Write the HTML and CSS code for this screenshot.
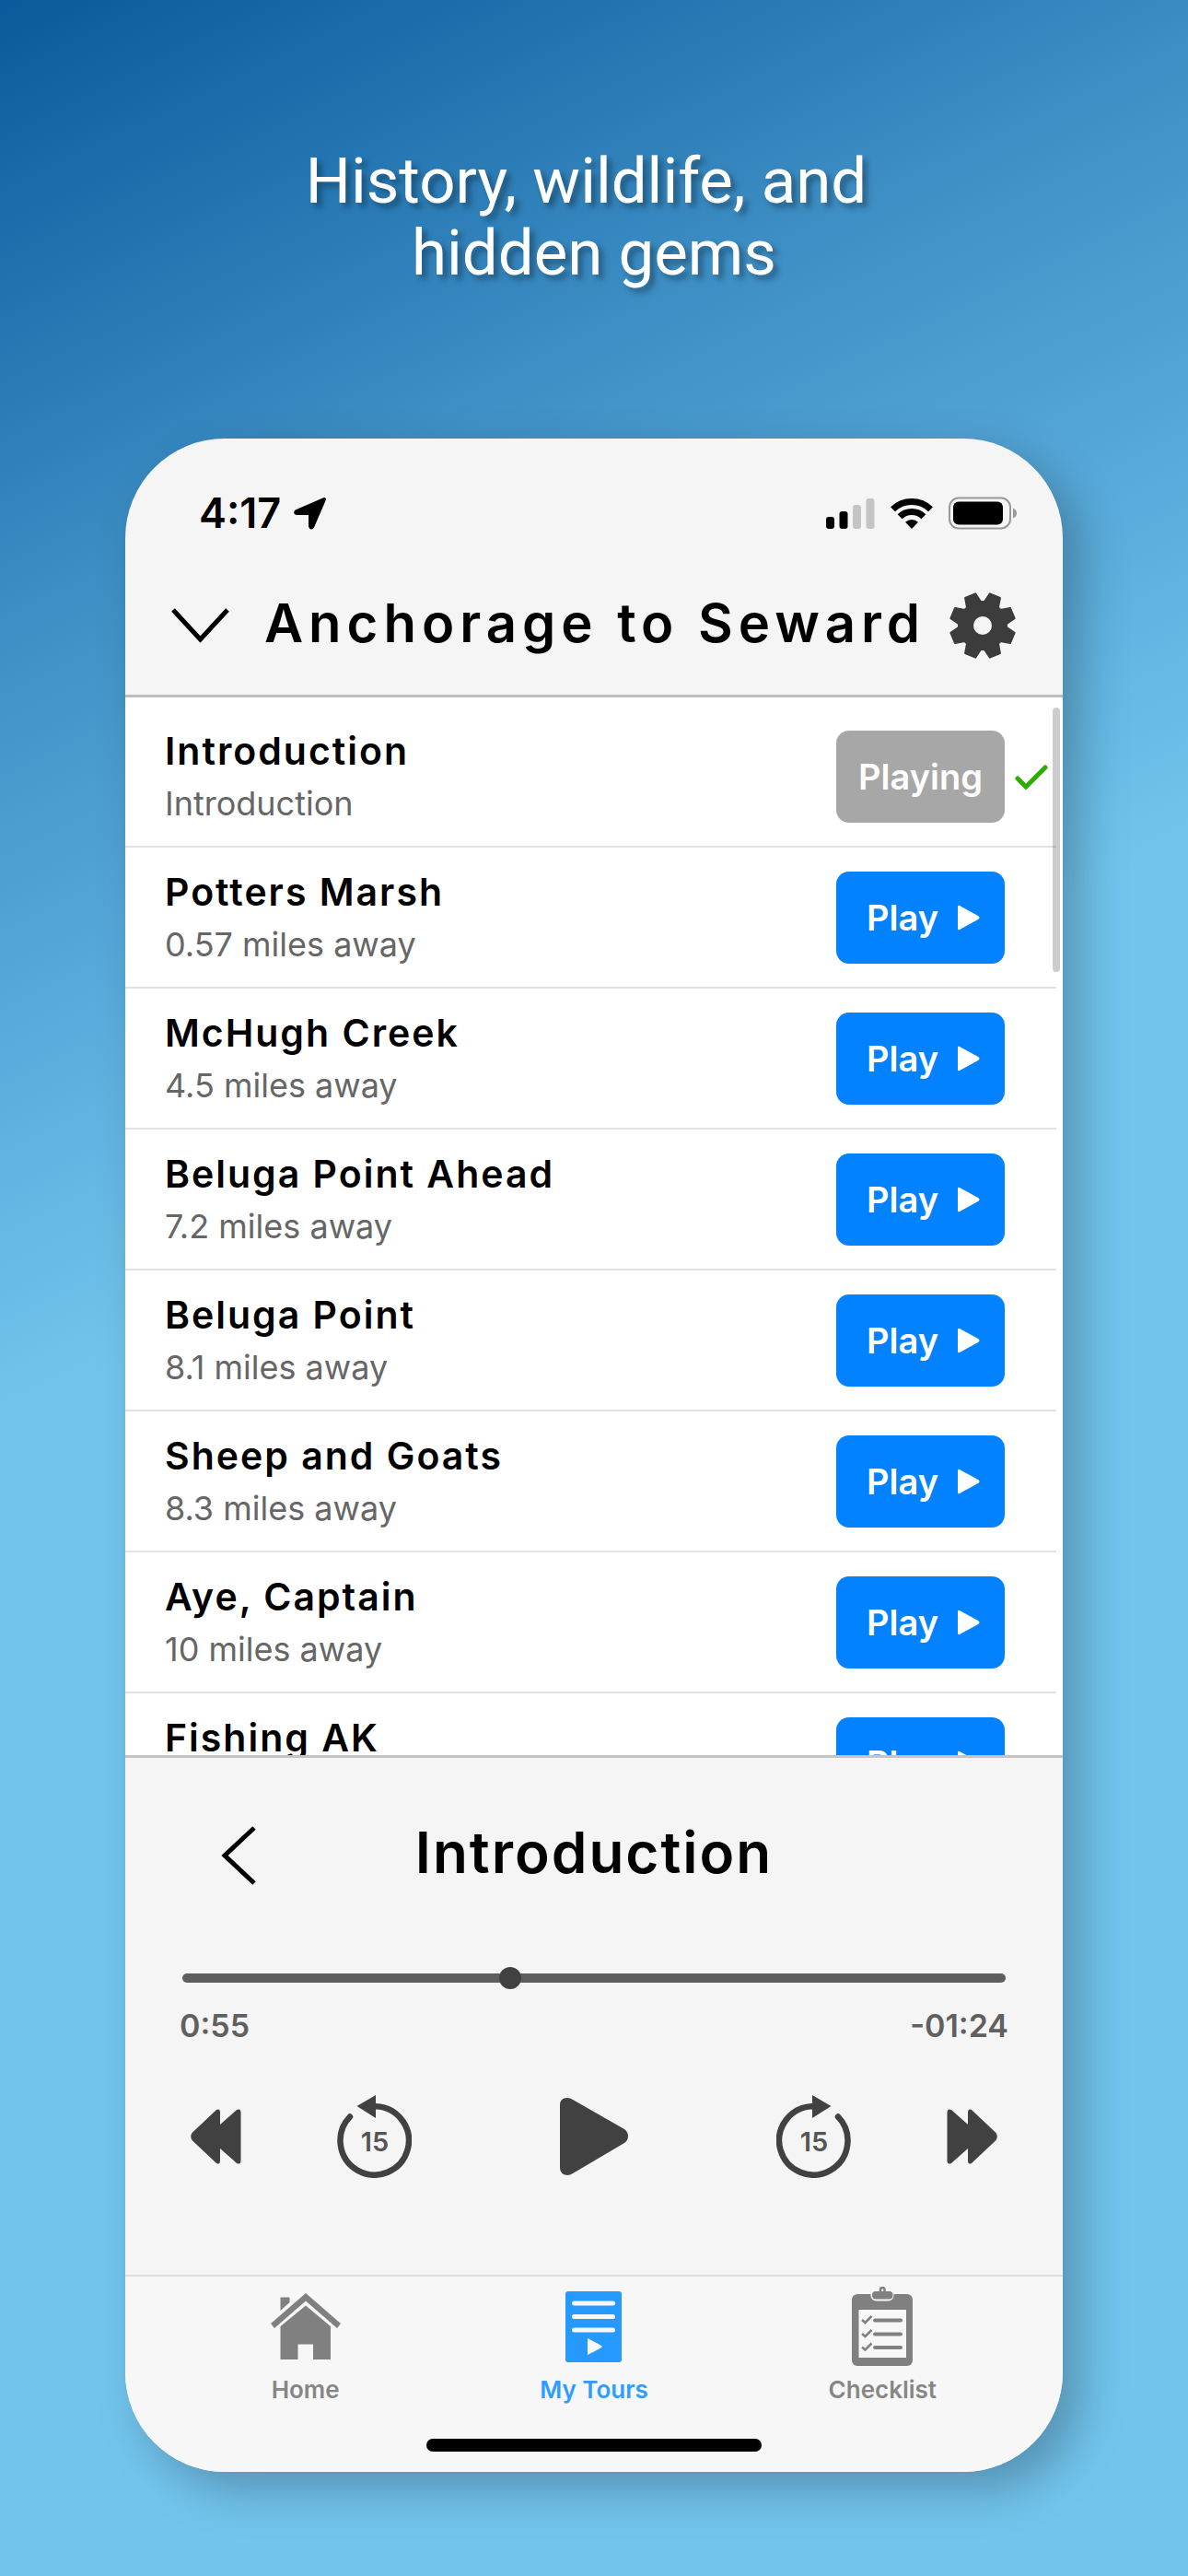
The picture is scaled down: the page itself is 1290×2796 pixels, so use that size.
FILE: index.html
```html
<!DOCTYPE html>
<html lang="en">

<head>
    <meta charset="utf-8">
    <meta name="viewport" content="width=device-width, initial-scale=1.0">
    <title>Anchorage to Seward</title>
    <link rel="stylesheet" href="styles.css">
</head>

<body>
    <h1 class="headline">History, wildlife, and 
hidden gems</h1>

    <main class="phone">
        <div class="status">
            <span class="time">4:17</span>
            <svg width="36" height="36" viewBox="0 0 36 36"><path d="M33 3L3 16q-2 2 1 2h14v14q1 3 2.500 0z" stroke="#000" stroke-width="4" stroke-linejoin="round"/></svg>
            <div class="status-icons">
                <svg width="53" height="34" viewBox="0 0 53 34">
                    <rect y="21" width="9" height="13" rx="3"/>
                    <rect x="14.500" y="15" width="9" height="19" rx="3"/>
                    <rect x="29" y="8" width="9" height="26" rx="3" fill="#c4c4c4"/>
                    <rect x="43.500" y="1" width="9" height="33" rx="3" fill="#c4c4c4"/>
                </svg>
                <svg width="46" height="34" viewBox="-23 -34 46 34">
                    <path d="M-20.500-21.200a29.500 29.500 0 0 1 41 0M-12.900-13.300a18.500 18.500 0 0 1 25.800 0" fill="none" stroke="#000" stroke-width="7"/>
                    <path d="M0 0L-7-7.200a10 10 0 0 1 14 0z"/>
                </svg>
                <svg width="74" height="36" viewBox="0 0 74 36">
                    <rect x="1" y="1.500" width="66" height="33" rx="10" fill="none" stroke="#999" stroke-width="2"/>
                    <rect x="5" y="5.500" width="54" height="25" rx="6"/>
                    <path d="M70 12.500q4 1.500 4 5.500t-4 5.500z" fill="#999"/>
                </svg>
            </div>
        </div>

        <header class="header">
            <button class="icon-button" aria-label="Close">
                <svg width="63" height="38" viewBox="0 0 63 38"><path d="M2 2l29.500 32L61 2" fill="none" stroke="#000" stroke-width="5"/></svg>
            </button>
            <h2 class="tour-name">Anchorage to Seward</h2>
            <button class="icon-button" aria-label="Settings">
                <svg width="72" height="72" viewBox="-36 -36 72 72">
                    <defs><path id="tooth" d="M-8.500-23L-6-35H6L8.500-23z"/></defs>
                    <g fill="#3c3c3c" stroke="#3c3c3c" stroke-width="2" stroke-linejoin="round">
                        <use href="#tooth" transform="rotate(22.500)"/>
                        <use href="#tooth" transform="rotate(67.500)"/>
                        <use href="#tooth" transform="rotate(112.500)"/>
                        <use href="#tooth" transform="rotate(157.500)"/>
                        <use href="#tooth" transform="rotate(202.500)"/>
                        <use href="#tooth" transform="rotate(247.500)"/>
                        <use href="#tooth" transform="rotate(292.500)"/>
                        <use href="#tooth" transform="rotate(337.500)"/>
                    </g>
                    <circle r="18.500" fill="none" stroke="#3c3c3c" stroke-width="17"/>
                </svg>
            </button>
        </header>

        <section class="stops">
            <ul class="stop-list">
                <li class="stop">
                    <div><h3>Introduction</h3><p>Introduction</p></div>
                    <button class="play playing">Playing</button>
                    <svg class="check" width="36" height="30" viewBox="0 0 36 30"><path d="M3 16l9 9L33 4" fill="none" stroke="#2aaf00" stroke-width="5" stroke-linecap="round"/></svg>
                </li>
                <li class="stop">
                    <div><h3>Potters Marsh</h3><p>0.57 miles away</p></div>
                    <button class="play">Play <svg width="25" height="28" viewBox="0 0 25 28"><path d="M1 2q0-2 2-1l20 11q3 2 0 4L3 27q-2 1-2-1z" fill="#fff"/></svg></button>
                </li>
                <li class="stop">
                    <div><h3>McHugh Creek</h3><p>4.5 miles away</p></div>
                    <button class="play">Play <svg width="25" height="28" viewBox="0 0 25 28"><path d="M1 2q0-2 2-1l20 11q3 2 0 4L3 27q-2 1-2-1z" fill="#fff"/></svg></button>
                </li>
                <li class="stop">
                    <div><h3>Beluga Point Ahead</h3><p>7.2 miles away</p></div>
                    <button class="play">Play <svg width="25" height="28" viewBox="0 0 25 28"><path d="M1 2q0-2 2-1l20 11q3 2 0 4L3 27q-2 1-2-1z" fill="#fff"/></svg></button>
                </li>
                <li class="stop">
                    <div><h3>Beluga Point</h3><p>8.1 miles away</p></div>
                    <button class="play">Play <svg width="25" height="28" viewBox="0 0 25 28"><path d="M1 2q0-2 2-1l20 11q3 2 0 4L3 27q-2 1-2-1z" fill="#fff"/></svg></button>
                </li>
                <li class="stop">
                    <div><h3>Sheep and Goats</h3><p>8.3 miles away</p></div>
                    <button class="play">Play <svg width="25" height="28" viewBox="0 0 25 28"><path d="M1 2q0-2 2-1l20 11q3 2 0 4L3 27q-2 1-2-1z" fill="#fff"/></svg></button>
                </li>
                <li class="stop">
                    <div><h3>Aye, Captain</h3><p>10 miles away</p></div>
                    <button class="play">Play <svg width="25" height="28" viewBox="0 0 25 28"><path d="M1 2q0-2 2-1l20 11q3 2 0 4L3 27q-2 1-2-1z" fill="#fff"/></svg></button>
                </li>
                <li class="stop">
                    <div><h3>Fishing AK</h3></div>
                    <button class="play">Play <svg width="25" height="28" viewBox="0 0 25 28"><path d="M1 2q0-2 2-1l20 11q3 2 0 4L3 27q-2 1-2-1z" fill="#fff"/></svg></button>
                </li>
            </ul>
            <div class="scrollbar"></div>
        </section>

        <section class="player">
            <div class="player-title">
                <button class="icon-button" aria-label="Back">
                    <svg width="38" height="64" viewBox="0 0 38 64"><path d="M36 2L4 32l32 30" fill="none" stroke="#000" stroke-width="5"/></svg>
                </button>
                <h2>Introduction</h2>
            </div>

            <input class="seek" type="range" min="0" max="139" value="55" aria-label="Position">
            <div class="times">
                <span>0:55</span>
                <span>-01:24</span>
            </div>

            <div class="controls">
                <div class="control-group">
                    <button class="icon-button" aria-label="Previous">
                        <svg width="55" height="60" viewBox="0 0 55 60"><path d="M1.500 26L28 1Q32-1 32 4V17L50 1Q54.500-1 54.500 4V56Q54.500 61 50 59L32 43V56Q32 61 28 59L1.500 34Q-1 30 1.500 26z" fill="#414141"/></svg>
                    </button>
                    <button class="icon-button" aria-label="Back 15 seconds">
                        <svg width="81" height="90" viewBox="0 0 81 90">
                            <path d="M14 23.500A37.200 37.200 0 1 0 42 12.200" fill="none" stroke="#414141" stroke-width="6.500" stroke-linecap="round"/>
                            <path d="M21.500 12L42 0v25z" fill="#414141"/>
                            <text class="seconds" x="41" y="61" text-anchor="middle">15</text>
                        </svg>
                    </button>
                </div>
                <button class="icon-button" aria-label="Play">
                    <svg width="74" height="84" viewBox="0 0 74 84"><path d="M0 8Q0 0 8 0Q11 0 14 2L70 34Q74 37 74 41.500T70 49L14 82Q11 84 8 84Q0 83 0 76z" fill="#414141"/></svg>
                </button>
                <div class="control-group">
                    <button class="icon-button" aria-label="Forward 15 seconds">
                        <svg width="81" height="90" viewBox="0 0 81 90">
                            <path d="M67 23.500A37.200 37.200 0 1 1 39 12.200" fill="none" stroke="#414141" stroke-width="6.500" stroke-linecap="round"/>
                            <path d="M59.500 12L39 0v25z" fill="#414141"/>
                            <text class="seconds" x="41" y="61" text-anchor="middle">15</text>
                        </svg>
                    </button>
                    <button class="icon-button" aria-label="Next">
                        <svg width="55" height="60" viewBox="0 0 55 60"><path d="M53.500 26L27 1Q23-1 23 4V17L5 1Q.5-1 .5 4V56Q.5 61 5 59L23 43V56Q23 61 27 59L53.500 34Q56 30 53.500 26z" fill="#414141"/></svg>
                    </button>
                </div>
            </div>
        </section>

        <footer class="footer">
            <nav class="tabs">
                <a class="tab" href="#home">
                    <svg width="76" height="86" viewBox="0 -7 76 86" fill="#808080">
                        <path d="M38 0L76 33l-4 5L38 8.500 4 38l-4-5z"/>
                        <path d="M10.500 4.500h10V10l-10 9z"/>
                        <path d="M38 13.500L65 36v36H46V55.500H29.500V72h-19V36z"/>
                    </svg>
                    Home
                </a>
                <a class="tab active" href="#tours">
                    <svg width="61" height="86" viewBox="0 -5 61 86">
                        <rect width="61" height="77" rx="3" fill="#2699ff"/>
                        <path d="M9.500 13h42M9.500 27.500h42M9.500 42h42" stroke="#f7f7f7" stroke-width="5" stroke-linecap="round"/>
                        <path d="M24 51q16 8 16 9t-16 9z" fill="#f7f7f7"/>
                    </svg>
                    My Tours
                </a>
                <a class="tab" href="#checklist">
                    <svg width="66" height="86" viewBox="0 0 66 86">
                        <rect y="8" width="66" height="78" rx="6" fill="#808080"/>
                        <rect x="7.500" y="25" width="51.500" height="52" fill="#f7f7f7"/>
                        <rect x="20.500" y="3" width="25" height="12.500" rx="6" fill="#f7f7f7"/>
                        <rect x="22" y="5" width="22.500" height="8.500" rx="4" fill="#808080"/>
                        <path d="M31 6V3q0-2 2.200-2t2.300 2v3" fill="none" stroke="#808080" stroke-width="2.500"/>
                        <path d="M25 36.500h28M25 51.500h28M25 66h28" stroke="#808080" stroke-width="4" stroke-linecap="round"/>
                        <path d="M11 36l3.500 3 7-7M11 51l3.500 3 7-7M11 65.500l3.500 3 7-7" fill="none" stroke="#808080" stroke-width="2.500"/>
                    </svg>
                    Checklist
                </a>
            </nav>
            <div class="home-bar"></div>
        </footer>
    </main>
</body>

</html>
```
FILE: styles.css
```css
* {
    box-sizing: border-box;
    margin: 0;
    padding: 0;
}

body {
    display: flex;
    flex-direction: column;
    height: 100vh;
    padding: 158px 136px 113px;
    background: linear-gradient(154deg, #085a9c 0%, #3e8fc5 20%, #72c4ee 45%);
    font-family: Inter, "Liberation Sans", sans-serif;
    color: #000;
}

svg {
    display: block;
    flex: none;
}

.headline {
    margin-bottom: 162px;
    font: 400 69px/78px Roboto, sans-serif;
    text-align: center;
    white-space: break-spaces;
    color: #fff;
    text-shadow: 5px 5px 6px rgba(0, 0, 0, 0.35);
}

.phone {
    display: flex;
    flex-direction: column;
    flex: 1;
    min-height: 0;
    overflow: hidden;
    border-radius: 108px;
    background: #f5f5f5;
    box-shadow: 20px 20px 50px rgba(0, 0, 0, 0.25);
}

.icon-button {
    border: none;
    background: none;
    cursor: pointer;
}

/* status bar */
.status {
    display: flex;
    align-items: center;
    gap: 14px;
    padding: 58px 50px 0 80px;
}

.time {
    font-size: 45px;
    font-weight: 600;
    line-height: 46px;
}

.status-icons {
    display: flex;
    align-items: center;
    gap: 17px;
    margin-left: auto;
}

/* header */
.header {
    display: flex;
    align-items: center;
    gap: 26px;
    padding: 63px 51px 39px 50px;
    border-bottom: 3px solid #bcbcbc;
}

.tour-name {
    flex: 1;
    padding-bottom: 6px;
    font-size: 58px;
    font-weight: 600;
    line-height: 66px;
    letter-spacing: 6px;
    text-align: right;
    white-space: nowrap;
}

/* list of stops */
.stops {
    position: relative;
    flex: 1;
    min-height: 0;
    overflow: hidden;
    padding: 10px 7px 0 0;
    background: #fff;
}

.stop-list {
    list-style: none;
}

.stop {
    position: relative;
    display: flex;
    justify-content: space-between;
    align-items: flex-start;
    height: 153px;
    padding: 20px 56px 0 43px;
    border-bottom: 2px solid #e2e2e2;
}

.stop h3 {
    font-size: 41px;
    font-weight: 600;
    line-height: 57px;
    letter-spacing: 2px;
}

.stop p {
    font-size: 36px;
    line-height: 57px;
    color: #666;
}

.play {
    display: flex;
    justify-content: center;
    align-items: center;
    gap: 20px;
    width: 183px;
    height: 100px;
    margin-top: 6px;
    padding-left: 6px;
    border: none;
    border-radius: 14px;
    background: #0382ff;
    color: #fff;
    font-family: inherit;
    font-size: 38px;
    font-weight: 600;
    cursor: pointer;
}

.playing {
    padding-left: 0;
    background: #a7a7a7;
}

.check {
    position: absolute;
    top: 62px;
    right: 9px;
}

.scrollbar {
    position: absolute;
    top: 11px;
    right: 3px;
    width: 8px;
    height: 287px;
    border-radius: 4px;
    background: rgba(0, 0, 0, 0.2);
}

/* player */
.player {
    padding: 74px 59px 105px;
    border-top: 3px solid #c4c4c4;
}

.player-title {
    display: grid;
    grid-template-columns: 38px 1fr 38px;
    align-items: center;
    padding: 0 45px;
}

.player-title h2 {
    padding-bottom: 6px;
    font-size: 62px;
    font-weight: 600;
    line-height: 58px;
    letter-spacing: 2px;
    text-align: center;
}

.seek {
    appearance: none;
    display: block;
    width: calc(100% - 6px);
    height: 24px;
    margin: 89px 3px 20px;
    background: none;
}

.seek::-webkit-slider-runnable-track {
    height: 10px;
    border-radius: 5px;
    background: #5e5e5e;
}

.seek::-webkit-slider-thumb {
    appearance: none;
    width: 24px;
    height: 24px;
    margin-top: -7px;
    border-radius: 50%;
    background: #414141;
}

.times {
    display: flex;
    justify-content: space-between;
    margin-bottom: 55px;
    font-size: 34px;
    font-weight: 600;
    line-height: 40px;
    color: #606060;
}

.controls {
    display: flex;
    justify-content: space-between;
    align-items: center;
    padding: 0 12px;
}

.control-group {
    display: flex;
    align-items: center;
    gap: 104px;
}

.seconds {
    font-family: Inter, sans-serif;
    font-size: 29px;
    font-weight: 600;
    fill: #555;
}

/* bottom tabs */
.footer {
    padding-bottom: 22px;
    border-top: 2px solid #dedede;
    background: #f7f7f7;
}

.tabs {
    display: flex;
    padding: 11px 39px 0;
}

.tab {
    display: flex;
    flex: 1;
    flex-direction: column;
    align-items: center;
    gap: 10px;
    font-size: 26px;
    font-weight: 600;
    line-height: 32px;
    color: #868686;
    text-decoration: none;
}

.active {
    color: #2e9dff;
}

.home-bar {
    width: 364px;
    height: 14px;
    margin: 37px auto 0;
    border-radius: 7px;
    background: #000;
}
```
